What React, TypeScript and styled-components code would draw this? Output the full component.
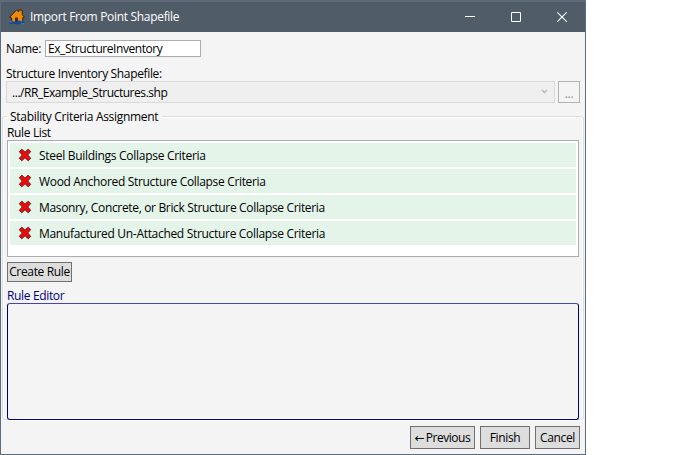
import React from "react";
import styled, { createGlobalStyle } from "styled-components";

const GlobalStyle = createGlobalStyle`
  * { box-sizing: border-box; }
  html, body { margin: 0; background: #fff; overflow: hidden; }
  body { font: 12px/16px "Open Sans", "Noto Sans", sans-serif; color: #000; }
`;

const Text = styled.span<{ $spacing?: number; $color?: string }>`
  white-space: pre;
  letter-spacing: ${(p) => p.$spacing ?? -0.35}px;
  color: ${(p) => p.$color ?? "inherit"};
`;

const Window = styled.div`
  width: 586px;
  height: 455px;
  display: flex;
  flex-direction: column;
  background: #f4f4f4;
  border: 1px solid #5f6b78;
  border-top-width: 2px;
`;

const TitleBar = styled.header`
  height: 30px;
  flex: none;
  display: flex;
  align-items: center;
  padding-left: 8px;
  background: #515c69;
  color: #fff;
`;

const Title = styled.h1`
  margin: 0 0 0 5px;
  flex: 1;
  font-size: 12px;
  font-weight: 400;
  line-height: 16px;
`;

const WindowButton = styled.div`
  width: 46px;
  height: 30px;
  display: flex;
  align-items: center;
  justify-content: center;
`;

const NameRow = styled.div`
  display: flex;
  align-items: center;
  height: 17px;
  margin: 8px 0 0 5px;
`;

const NameLabel = styled.label`
  width: 39px;
`;

const NameField = styled.div`
  display: flex;
  align-items: center;
  width: 156px;
  height: 17px;
  padding-left: 2px;
  background: #fff;
  border: 1px solid #abadb3;
`;

const ShapefileLabel = styled.div`
  height: 16px;
  margin: 9px 0 0 5px;
`;

const ShapefileRow = styled.div`
  display: flex;
  gap: 3px;
  height: 22px;
  margin: -1px 5px 0;
`;

const Combo = styled.div`
  width: 549px;
  display: flex;
  align-items: center;
  justify-content: space-between;
  padding: 2px 6px 0 5px;
  background: #efefef;
  border: 1px solid #d9d9d9;
`;

const Chevron = styled.svg`
  margin-top: -3px;
`;

const BrowseButton = styled.div`
  width: 22px;
  display: flex;
  align-items: center;
  justify-content: center;
  padding-top: 3px;
  background: #f4f4f4;
  border: 1px solid #adb2b5;
`;

const Group = styled.fieldset`
  position: relative;
  width: 582px;
  height: 316px;
  min-width: 0;
  flex: none;
  margin: 6px 0 0 1px;
  padding: 0 5px;
  border: 0;
  &::before {
    content: "";
    position: absolute;
    inset: 7px 0 0 0;
    border: 1px solid #d5dfe5;
    border-radius: 3px;
    box-shadow: inset 0 0 0 1px #fff, 0 1px 0 #fff;
  }
`;

const Legend = styled.div`
  position: relative;
  width: 155px;
  height: 16px;
  padding-left: 3px;
  background: #f4f4f4;
`;

const GroupBody = styled.div`
  position: relative;
`;

const Label = styled.div`
  height: 15px;
`;

const RuleList = styled.div`
  width: 572px;
  height: 117px;
  display: flex;
  flex-direction: column;
  gap: 2px;
  padding: 2px;
  background: #fff;
  border: 1px solid #abadb3;
`;

const RuleRow = styled.div`
  display: flex;
  align-items: center;
  gap: 7px;
  height: 24px;
  padding: 2px 0 0 8px;
  background: #e4f4e9;
`;

const RemoveGlyph = styled.svg`
  margin-top: -2px;
`;

const Button = styled.div<{ $width: number; $height: number }>`
  width: ${(p) => p.$width}px;
  height: ${(p) => p.$height}px;
  display: flex;
  align-items: center;
  justify-content: center;
  background: #ddd;
  border: 1px solid #707070;
`;

const Arrow = styled.span`
  font: 12px/16px "DejaVu Sans", sans-serif;
  width: 11px;
`;

const CreateArea = styled.div`
  margin: 5px 0 6px;
`;

const Editor = styled.div`
  width: 572px;
  height: 117px;
  border: 1px solid #000080;
  border-top-color: #4646a5;
  border-radius: 3px;
`;

const Footer = styled.footer`
  display: flex;
  justify-content: flex-end;
  gap: 5px;
  margin: 1px 5px 0 0;
`;

const HouseIcon = () => (
  <svg width="16" height="16" viewBox="0 0 16 16">
    <path d="M.7 8.2 7.6.9 9.8 3V1h3.4v4.6L15.4 8l-1.7.6v5.2H2.6V9z" fill="#f08a08" stroke="#30261c" strokeWidth="1" />
    <path d="M6 8.5h3v4.7H6z" fill="#3d3023" />
    <path d="M0 12.5c2.8-1.8 4.2.4 6.3.2 2.3-.2 3.7-2.1 5.5-.7 1.4 1.2 2.7.8 4.2.4-1.4 2.2-3.1 2.5-4.4 2.3C9 15.9 7.3 15.6 5.7 15 4 14.3 2 14.5.7 15.4z" fill="#124b9d" />
    <path d="M0 12.8h3M12 14.8h3" stroke="#278bd2" />
  </svg>
);

const RemoveIcon = () => (
  <RemoveGlyph width="14" height="14" viewBox="0 0 14 14">
    <path d="M3.9 1.2 7 4.2l3.1-3 2.6 2.4L9.7 7l3 3.3-2.5 2.5L7 9.7l-3.2 3.1-2.5-2.5L4.3 7l-3-3.3z" fill="#ef0909" stroke="#74191b" strokeLinejoin="round" />
  </RemoveGlyph>
);

const RULES: [string, number][] = [
  ["Steel Buildings Collapse Criteria", -0.29],
  ["Wood Anchored Structure Collapse Criteria", -0.33],
  ["Masonry, Concrete, or Brick Structure Collapse Criteria", -0.34],
  ["Manufactured Un-Attached Structure Collapse Criteria", -0.31],
];

export default function App() {
  return (
    <>
      <GlobalStyle />
      <Window>
        <TitleBar>
          <HouseIcon />
          <Title><Text $spacing={-0.31}>Import From Point Shapefile</Text></Title>
          <WindowButton>
            <svg width="10" height="10"><path d="M0 4.5h10" stroke="#fff" /></svg>
          </WindowButton>
          <WindowButton>
            <svg width="10" height="10"><path d="M.5.5h9v9h-9z" stroke="#fff" fill="none" /></svg>
          </WindowButton>
          <WindowButton>
            <svg width="10" height="10"><path d="m.3.3 9.4 9.4m0-9.4L.3 9.7" stroke="#fff" strokeWidth="1.1" /></svg>
          </WindowButton>
        </TitleBar>
        <NameRow>
          <NameLabel><Text>Name:</Text></NameLabel>
          <NameField><Text $spacing={-0.44}>Ex_StructureInventory</Text></NameField>
        </NameRow>
        <ShapefileLabel><Text>Structure Inventory Shapefile:</Text></ShapefileLabel>
        <ShapefileRow>
          <Combo>
            <Text $spacing={-0.45}>.../RR_Example_Structures.shp</Text>
            <Chevron width="7" height="6"><path d="m1 1 2.5 2.5L6 1" fill="none" stroke="#b4b4b4" strokeWidth="1.3" /></Chevron>
          </Combo>
          <BrowseButton><Text $color="#838383">...</Text></BrowseButton>
        </ShapefileRow>
        <Group>
          <Legend><Text $spacing={-0.3}>Stability Criteria Assignment</Text></Legend>
          <GroupBody>
            <Label><Text>Rule List</Text></Label>
            <RuleList>
              {RULES.map(([name, spacing]) => (
                <RuleRow key={name}>
                  <RemoveIcon />
                  <Text $spacing={spacing}>{name}</Text>
                </RuleRow>
              ))}
            </RuleList>
            <CreateArea>
              <Button $width={65} $height={20}><Text>Create Rule</Text></Button>
            </CreateArea>
            <Label><Text $color="#000080">Rule Editor</Text></Label>
            <Editor />
          </GroupBody>
        </Group>
        <Footer>
          <Button $width={65} $height={23}><Arrow>←</Arrow><Text $spacing={-0.45}>Previous</Text></Button>
          <Button $width={50} $height={23}><Text>Finish</Text></Button>
          <Button $width={45} $height={23}><Text>Cancel</Text></Button>
        </Footer>
      </Window>
    </>
  );
}
